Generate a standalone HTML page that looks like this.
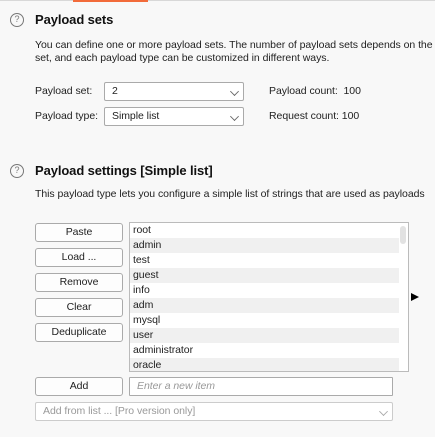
<!DOCTYPE html>
<html><head><style>
*{box-sizing:border-box;margin:0;padding:0}
body{width:435px;height:437px;background:#f8f8f8;font-family:"Liberation Sans",sans-serif;font-size:10.5px;color:#222;position:relative;overflow:hidden;letter-spacing:-0.05px}
.a{position:absolute;white-space:nowrap}
.topl{position:absolute;left:0;top:0;width:435px;height:1px;background:#d8d8d8}
.tab{position:absolute;left:73px;top:0;width:75px;height:2px;background:#f26b3a}
.q{position:absolute;width:14px;height:14px;border:1.3px solid #777;border-radius:50%;font-size:9px;color:#777;text-align:center;line-height:11px;letter-spacing:0}
h{position:absolute;font-weight:bold;font-size:13px;color:#111;white-space:nowrap;letter-spacing:-0.1px}
.sel{position:absolute;background:#fff;border:1px solid #aaa;border-radius:2px;height:19px;padding-left:7px;line-height:17px}
.chev{position:absolute;right:5px;top:5px;width:7px;height:7px;border-right:1px solid #666;border-bottom:1px solid #666;transform:rotate(45deg) scale(.9)}
.btn{position:absolute;left:35px;width:88px;height:19px;border:1px solid #aaa;border-radius:3px;background:#fdfdfd;text-align:center;line-height:17px}
.list{position:absolute;left:129px;top:222px;width:280px;height:150px;border:1px solid #bbb;background:#fff;overflow:hidden}
.r{height:15px;line-height:14px;padding-left:3px;width:269px}
.g{background:#f0f0f0}
</style></head><body>
<div class="topl"></div><div class="tab"></div>
<div class="q" style="left:10px;top:13px">?</div>
<h style="left:35px;top:12px">Payload sets</h>
<div class="a" style="left:35px;top:39px">You can define one or more payload sets. The number of payload sets depends on the</div>
<div class="a" style="left:35px;top:52px">set, and each payload type can be customized in different ways.</div>
<div class="a" style="left:35px;top:85px">Payload set:</div>
<div class="sel" style="left:104px;top:82px;width:140px">2<div class="chev"></div></div>
<div class="a" style="left:269px;top:85px">Payload count:&nbsp; 100</div>
<div class="a" style="left:35px;top:110px">Payload type:</div>
<div class="sel" style="left:104px;top:107px;width:140px">Simple list<div class="chev"></div></div>
<div class="a" style="left:269px;top:110px">Request count: 100</div>
<div class="q" style="left:10px;top:164px">?</div>
<h style="left:35px;top:163px">Payload settings [Simple list]</h>
<div class="a" style="left:35px;top:188px">This payload type lets you configure a simple list of strings that are used as payloads</div>
<div class="btn" style="top:223px">Paste</div>
<div class="btn" style="top:248px">Load ...</div>
<div class="btn" style="top:273px">Remove</div>
<div class="btn" style="top:298px">Clear</div>
<div class="btn" style="top:323px">Deduplicate</div>
<div class="list">
<div class="r">root</div><div class="r g">admin</div><div class="r">test</div><div class="r g">guest</div><div class="r">info</div><div class="r g">adm</div><div class="r">mysql</div><div class="r g">user</div><div class="r">administrator</div><div class="r g">oracle</div>
<div style="position:absolute;left:270px;top:3px;width:6px;height:18px;background:#e2e2e2;border-radius:3px"></div>
</div>
<div style="position:absolute;left:411px;top:293px;width:0;height:0;border-top:4px solid transparent;border-bottom:4px solid transparent;border-left:8px solid #000"></div>
<div class="btn" style="top:377px">Add</div>
<div class="sel" style="left:129px;top:377px;width:264px;border-radius:1px;color:#999;font-style:italic">Enter a new item</div>
<div class="sel" style="left:35px;top:402px;width:358px;color:#999;border-color:#ccc">Add from list ... [Pro version only]<div class="chev" style="border-color:#aaa"></div></div>
</body></html>
